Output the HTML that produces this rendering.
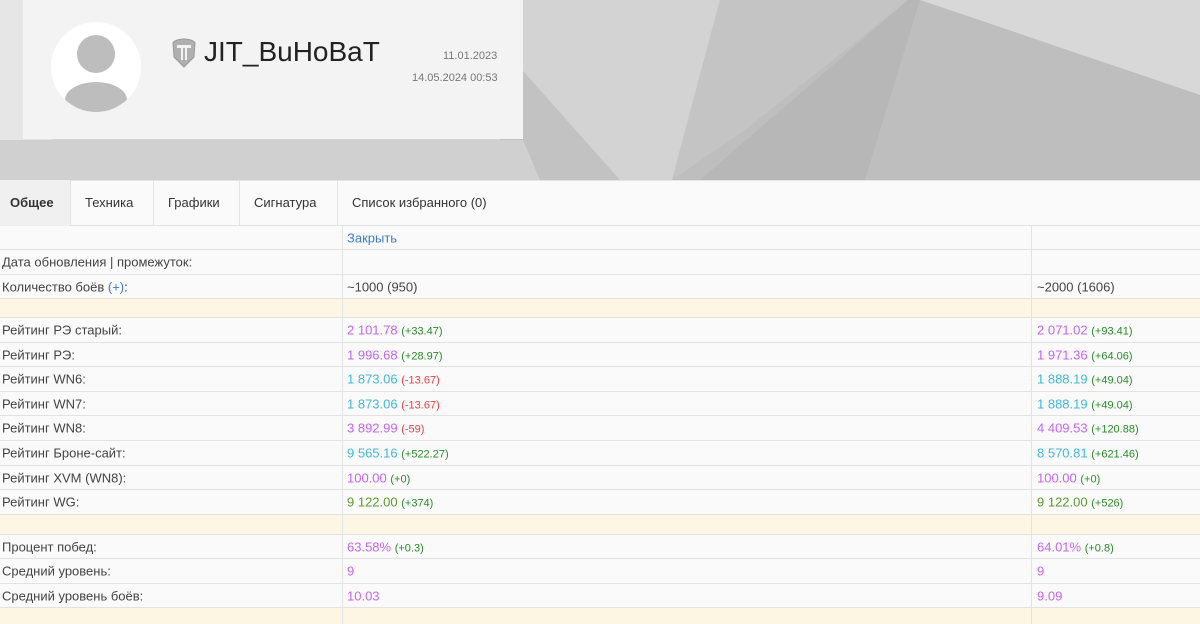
<!DOCTYPE html>
<html><head><meta charset="utf-8"><style>
*{margin:0;padding:0;box-sizing:border-box}
body{width:1200px;height:624px;overflow:hidden;background:#fafafa;font-family:"Liberation Sans",sans-serif;font-size:13px;color:#444;position:relative}
.a{position:absolute}
.row{position:absolute;left:0;width:1200px;border-bottom:1px solid #e2e2e2;background:#fafafa}
.row span{position:absolute;top:50%;transform:translateY(-50%);white-space:nowrap}
.y{background:#fdf6e3}
.vl{position:absolute;top:226px;bottom:0;width:1px;background:#e2e2e2}
.p{color:#c466f2}.c{color:#41b8d9}.g{color:#2a8a2a;font-size:11px}.r{color:#e8404a;font-size:11px}.o{color:#5d9a2e}
b{font-weight:normal}i{font-style:normal}
.tab{position:absolute;top:180px;height:46px;line-height:46px;font-size:13px;color:#333;border-right:1px solid #e2e2e2;padding-left:14px}
</style></head><body>
<svg class="a" style="left:0;top:0" width="1200" height="180">
<rect width="1200" height="180" fill="#bebebe"/>
<polygon points="0,0 720,0 672,180 0,180" fill="#d3d3d3"/>
<polygon points="0,0 230,0 0,180" fill="#e6e6e6"/>
<polygon points="500,45 620,180 500,180" fill="#c2c2c2"/>
<polygon points="0,140 523,140 540,180 0,180" fill="#d0d0d0"/>
<polygon points="720,0 908,0 745,130 672,180" fill="#c4c4c4"/>
<polygon points="908,0 920,0 865,180 700,180" fill="#b7b7b7"/>
<polygon points="920,0 1200,0 1200,95" fill="#d8d8d8"/>
<polygon points="865,180 920,0 1200,95 1200,180" fill="#bebebe"/>
</svg>
<div class="a" style="left:23px;top:0;width:500px;height:139px;background:#f3f3f3"></div>
<svg class="a" style="left:51px;top:22px" width="90" height="90">
<defs><clipPath id="cc"><circle cx="45" cy="45" r="45"/></clipPath></defs>
<circle cx="45" cy="45" r="45" fill="#fff"/>
<g clip-path="url(#cc)" fill="#bdbdbe"><circle cx="45" cy="32" r="19"/><ellipse cx="45" cy="78" rx="31" ry="18"/></g>
</svg>
<svg class="a" style="left:172px;top:38px" width="24" height="30" viewBox="0 0 24 30">
<path d="M12 1 C6 1 2 3 1 5 L2 19 L12 29 L22 19 L23 5 C22 3 18 1 12 1Z" fill="#b0b0b0" stroke="#999" stroke-width="1"/>
<path d="M5 7 H19 V10 H15 V22 H13 V10 H11 V22 H9 V10 H5Z" fill="#f3f3f3"/>
</svg>
<div class="a" style="left:204px;top:36px;font-size:28px;color:#222">JIT_BuHoBaT</div>
<div class="a" style="left:443px;top:50px;font-size:11px;color:#777">11.01.2023</div>
<div class="a" style="left:412px;top:72px;font-size:11px;color:#777">14.05.2024 00:53</div>
<div class="a" style="left:0;top:180px;width:1200px;height:46px;background:#fafafa;border-top:1px solid #e6e6e6;border-bottom:1px solid #e2e2e2"></div>
<div class="tab" style="left:0;width:71px;font-weight:bold;background:#f0f0f0;padding-left:10px">Общее</div>
<div class="tab" style="left:71px;width:83px">Техника</div>
<div class="tab" style="left:154px;width:86px">Графики</div>
<div class="tab" style="left:240px;width:98px">Сигнатура</div>
<div class="tab" style="left:338px;width:184px;border-right:0">Список избранного (0)</div>

<div class="row" style="top:226px;height:24px"><span style="left:347px;color:#3d7cc9">Закрыть</span></div>
<div class="row" style="top:250px;height:25px"><span style="left:2px">Дата обновления | промежуток:</span></div>
<div class="row" style="top:275px;height:24px"><span style="left:2px">Количество боёв <span style="position:static;transform:none;color:#3d7cc9">(+)</span>:</span><span style="left:347px">~1000 (950)</span><span style="left:1037px">~2000 (1606)</span></div>
<div class="row y" style="top:299px;height:19px"></div>
<div class="row" style="top:318px;height:25px"><span style="left:2px">Рейтинг РЭ старый:</span><span style="left:347px"><b class="p">2 101.78</b> <i class="g">(+33.47)</i></span><span style="left:1037px"><b class="p">2 071.02</b> <i class="g">(+93.41)</i></span></div>
<div class="row" style="top:343px;height:24px"><span style="left:2px">Рейтинг РЭ:</span><span style="left:347px"><b class="p">1 996.68</b> <i class="g">(+28.97)</i></span><span style="left:1037px"><b class="p">1 971.36</b> <i class="g">(+64.06)</i></span></div>
<div class="row" style="top:367px;height:25px"><span style="left:2px">Рейтинг WN6:</span><span style="left:347px"><b class="c">1 873.06</b> <i class="r">(-13.67)</i></span><span style="left:1037px"><b class="c">1 888.19</b> <i class="g">(+49.04)</i></span></div>
<div class="row" style="top:392px;height:24px"><span style="left:2px">Рейтинг WN7:</span><span style="left:347px"><b class="c">1 873.06</b> <i class="r">(-13.67)</i></span><span style="left:1037px"><b class="c">1 888.19</b> <i class="g">(+49.04)</i></span></div>
<div class="row" style="top:416px;height:25px"><span style="left:2px">Рейтинг WN8:</span><span style="left:347px"><b class="p">3 892.99</b> <i class="r">(-59)</i></span><span style="left:1037px"><b class="p">4 409.53</b> <i class="g">(+120.88)</i></span></div>
<div class="row" style="top:441px;height:25px"><span style="left:2px">Рейтинг Броне-сайт:</span><span style="left:347px"><b class="c">9 565.16</b> <i class="g">(+522.27)</i></span><span style="left:1037px"><b class="c">8 570.81</b> <i class="g">(+621.46)</i></span></div>
<div class="row" style="top:466px;height:24px"><span style="left:2px">Рейтинг XVM (WN8):</span><span style="left:347px"><b class="p">100.00</b> <i class="g">(+0)</i></span><span style="left:1037px"><b class="p">100.00</b> <i class="g">(+0)</i></span></div>
<div class="row" style="top:490px;height:25px"><span style="left:2px">Рейтинг WG:</span><span style="left:347px"><b class="o">9 122.00</b> <i class="g">(+374)</i></span><span style="left:1037px"><b class="o">9 122.00</b> <i class="g">(+526)</i></span></div>
<div class="row y" style="top:515px;height:20px"></div>
<div class="row" style="top:535px;height:24px"><span style="left:2px">Процент побед:</span><span style="left:347px"><b class="p">63.58%</b> <i class="g">(+0.3)</i></span><span style="left:1037px"><b class="p">64.01%</b> <i class="g">(+0.8)</i></span></div>
<div class="row" style="top:559px;height:25px"><span style="left:2px">Средний уровень:</span><span style="left:347px" class="p">9</span><span style="left:1037px" class="p">9</span></div>
<div class="row" style="top:584px;height:24px"><span style="left:2px">Средний уровень боёв:</span><span style="left:347px" class="p">10.03</span><span style="left:1037px" class="p">9.09</span></div>
<div class="row y" style="top:608px;height:16px;border:0"></div>
<div class="vl" style="left:342px"></div>
<div class="vl" style="left:1031px"></div>
</body></html>
